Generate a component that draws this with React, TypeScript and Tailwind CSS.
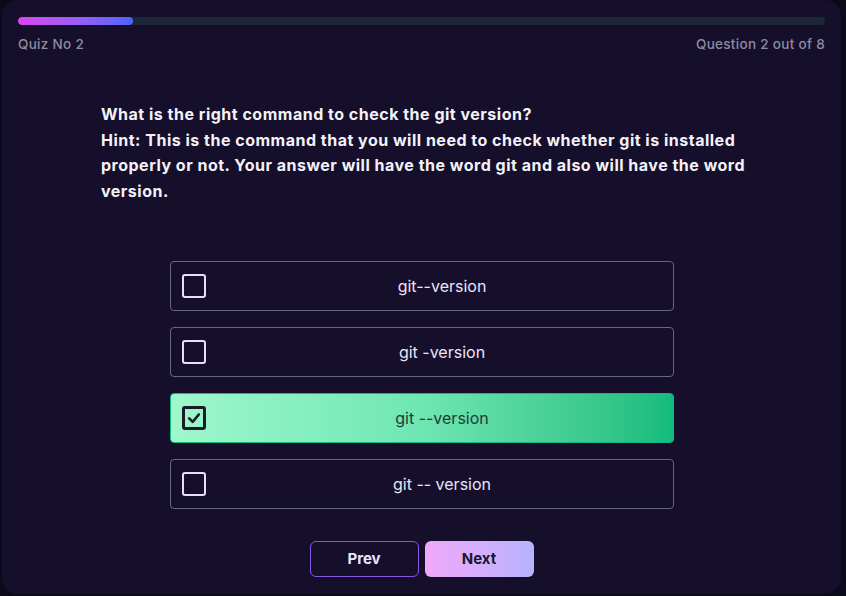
import React from "react";

const options = ["git--version", "git -version", "git --version", "git -- version"];

function Box({ checked }: { checked: boolean }) {
  if (checked) {
    return (
      <div className="w-6 h-6 shrink-0 rounded-[3px] border-[3px] border-[#1b1a26] flex items-center justify-center bg-transparent">
        <svg width="14" height="14" viewBox="0 0 16 16" fill="none">
          <path d="M2.5 8.5 L6.5 12.5 L13.5 4" stroke="#1b1a26" strokeWidth="3" strokeLinecap="round" strokeLinejoin="round" />
        </svg>
      </div>
    );
  }
  return <div className="w-6 h-6 shrink-0 rounded-[3px] border-2 border-[#eadcff]" />;
}

export default function App() {
  return (
    <div className="w-[846px] h-[596px] bg-[#0b0a1a] pl-[2px]" style={{ fontFamily: "Inter, 'Noto Sans', sans-serif" }}>
      <div className="w-[839px] h-[594px] bg-[#150f2b] rounded-[16px] px-4 pt-[17px] flex flex-col">
        <div className="h-2 w-full rounded-full bg-[#1c2637] overflow-hidden">
          <div className="h-2 w-[115px] rounded-full bg-gradient-to-r from-[#dd43f0] to-[#4b63fb]" />
        </div>
        <div className="flex justify-between mt-[11px] text-[13.5px] tracking-[0.3px] font-medium text-[#8f8aa0] leading-[16px]">
          <span>Quiz No 2</span>
          <span>Question 2 out of 8</span>
        </div>
        <div className="mt-[50px] pl-[83px] pr-[60px] text-[16px] tracking-[0.5px] font-bold text-[#f4f2f8] leading-[25.5px]">
          <p>What is the right command to check the git version?</p>
          <p>Hint: This is the command that you will need to check whether git is installed properly or not. Your answer will have the word git and also will have the word version.</p>
        </div>
        <div className="mt-[57px] flex flex-col items-center gap-4">
          {options.map((o, i) => {
            const sel = i === 2;
            return (
              <div
                key={o}
                className={
                  sel
                    ? "w-[504px] h-[50px] rounded-[4px] border border-[#12b97e] bg-gradient-to-r from-[#9ef8cc] via-[#6ee6b4] to-[#10bb7d] flex items-center pl-[11px]"
                    : "w-[504px] h-[50px] rounded-[4px] border border-[#6a6580] flex items-center pl-[11px]"
                }
              >
                <Box checked={sel} />
                <span
                  className={
                    "flex-1 ml-[6px] text-center text-[16px] " +
                    (sel ? "text-[#1f3b33]" : "text-[#ece4f8]")
                  }
                >
                  {o}
                </span>
              </div>
            );
          })}
        </div>
        <div className="mt-[32px] flex justify-center gap-[6px]">
          <button className="w-[109px] h-[36px] rounded-[6px] border border-[#8a55e6] bg-transparent text-[#ece4f8] font-bold text-[15px]">
            Prev
          </button>
          <button className="w-[109px] h-[36px] rounded-[6px] bg-gradient-to-r from-[#f0a8fb] to-[#b6b3fd] text-[#1c1830] font-bold text-[15px]">
            Next
          </button>
        </div>
      </div>
    </div>
  );
}
